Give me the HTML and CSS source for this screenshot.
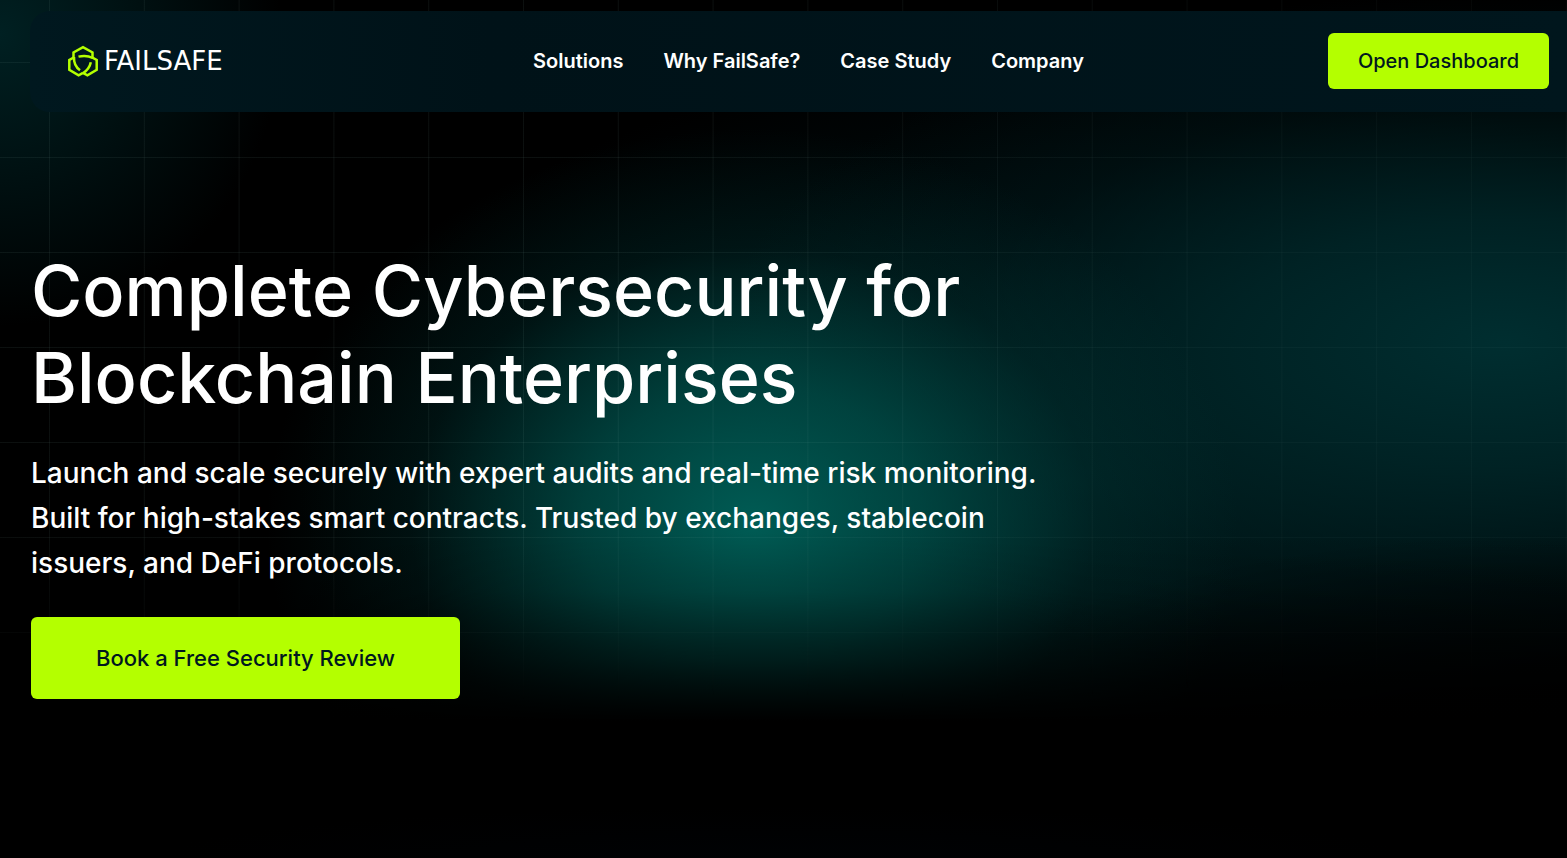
FILE: index.html
```
<!DOCTYPE html>
<html lang="en">
<head>
    <title>FailSafe</title>
    <meta charset="utf-8">
    <meta name="viewport" content="width=device-width, initial-scale=1">
    <link rel="stylesheet" href="styles.css">
</head>
<body>
<div class="page">
    <div class="glow"></div>
    <div class="grid-lines"></div>

    <header class="header">
        <a class="logo" href="#">
            <svg class="logo-mark" viewBox="0 0 30 32" width="30" height="32" aria-hidden="true">
                <g fill="none" stroke="#b4ff00" stroke-width="2.500">
                    <path d="M5.500 12.500V7.500L15 2.200l9.500 5.300V12.500"/>
                    <path d="M6 12.400L1.300 15v9.800L10.600 30.300 15 27.900"/>
                    <path d="M24 12.400L28.700 15v9.800L19.400 30.300 15 27.900"/>
                    <path d="M10.500 11.600C16 10.300 21 11 24.800 13"/>
                    <path d="M6 12C5.700 17.500 8.200 22.500 12 25.200"/>
                    <path d="M22.800 17.200C22 21.500 19 25.500 15 28.200"/>
                </g>
            </svg>
            <span class="logo-name">FAILSAFE</span>
        </a>
        <nav class="menu">
            <a href="#">Solutions</a>
            <a href="#">Why FailSafe?</a>
            <a href="#">Case Study</a>
            <a href="#">Company</a>
        </nav>
        <button class="btn btn-dashboard" type="button">Open Dashboard</button>
    </header>

    <main class="hero">
        <h1>Complete Cybersecurity for Blockchain Enterprises</h1>
        <p>Launch and scale securely with expert audits and real-time risk monitoring. Built for high-stakes smart contracts. Trusted by exchanges, stablecoin issuers, and DeFi protocols.</p>
        <button class="btn btn-review" type="button">Book a Free Security Review</button>
    </main>
</div>
</body>
</html>
```

FILE: styles.css
```
* {
    box-sizing: border-box;
    margin: 0;
    padding: 0;
}

body {
    background: #000;
    color: #fff;
    font-family: Inter, "Liberation Sans", sans-serif;
}

.page {
    position: relative;
    min-height: 100vh;
    padding-top: 11px;
    overflow: hidden;
}

/* backdrop */
.glow,
.grid-lines {
    position: absolute;
    inset: 0;
}

.glow {
    background:
        radial-gradient(ellipse 40% 6% at 50% 100%, #000204, transparent),
        linear-gradient(transparent 62%, rgba(0, 0, 0, .15) 69%, rgba(0, 0, 0, .55) 77%, #000 84%),
        radial-gradient(ellipse 31% 46% at 48% 61%, rgba(0, 98, 90, .92), rgba(0, 90, 83, .66) 35%, rgba(0, 70, 66, .2) 70%, transparent),
        radial-gradient(ellipse 50% 38% at 100% 100%, rgba(0, 0, 0, .85) 50%, transparent),
        radial-gradient(ellipse 50% 41% at 96% 40%, #002e30, rgba(0, 38, 40, .85) 35%, rgba(0, 28, 30, .35) 70%, transparent),
        radial-gradient(ellipse 50% 50% at 69% 56%, rgba(0, 40, 42, .7), rgba(0, 24, 28, .45) 60%, transparent),
        radial-gradient(ellipse 18% 34% at 0% 4%, #002022, transparent);
}

.grid-lines {
    background-image:
        linear-gradient(rgba(150, 200, 190, .08) 1px, transparent 1px),
        linear-gradient(90deg, rgba(150, 200, 190, .08) 1px, transparent 1px);
    background-size: 6.05vw 95px;
    background-position: 49px 62px;
    -webkit-mask-image: linear-gradient(100deg, #000 40%, rgba(0, 0, 0, .5) 80%), linear-gradient(#000 60%, transparent 82%);
    -webkit-mask-composite: source-in;
    mask-image: linear-gradient(100deg, #000 40%, rgba(0, 0, 0, .5) 80%), linear-gradient(#000 60%, transparent 82%);
    mask-composite: intersect;
}

/* header */
.header {
    position: relative;
    display: grid;
    grid-template-columns: 1fr auto 1fr;
    align-items: center;
    margin-left: 30px;
    padding: 22px 18px 23px 38px;
    border-radius: 20px 0 0 20px;
    background: linear-gradient(90deg, #00181f, #001218 30%, #00161d);
}

.logo {
    display: flex;
    align-items: center;
    gap: 6px;
    color: #fff;
    text-decoration: none;
}

.logo-mark {
    flex: none;
}

.logo-name {
    font-family: "DejaVu Sans", sans-serif;
    font-size: 26px;
    line-height: 32px;
}

.menu {
    display: flex;
    gap: 40px;
}

.menu a {
    color: #fff;
    font-size: 20px;
    font-weight: 600;
    line-height: 32px;
    text-decoration: none;
}

.btn {
    border: 0;
    border-radius: 6px;
    background: #b4ff00;
    color: #00171f;
    font-family: inherit;
    font-weight: 500;
    cursor: pointer;
}

.btn-dashboard {
    justify-self: end;
    padding: 12px 30px;
    font-size: 20px;
    line-height: 32px;
}

/* hero */
.hero {
    position: relative;
    max-width: 1090px;
    padding: 135px 31px 64px;
}

.hero h1 {
    font-size: 70px;
    font-weight: 500;
    line-height: 87px;
}

.hero p {
    margin-top: 30px;
    font-size: 28px;
    font-weight: 500;
    line-height: 45px;
}

.btn-review {
    margin-top: 31px;
    padding: 25px 65px;
    font-size: 22px;
    line-height: 32px;
}
```
